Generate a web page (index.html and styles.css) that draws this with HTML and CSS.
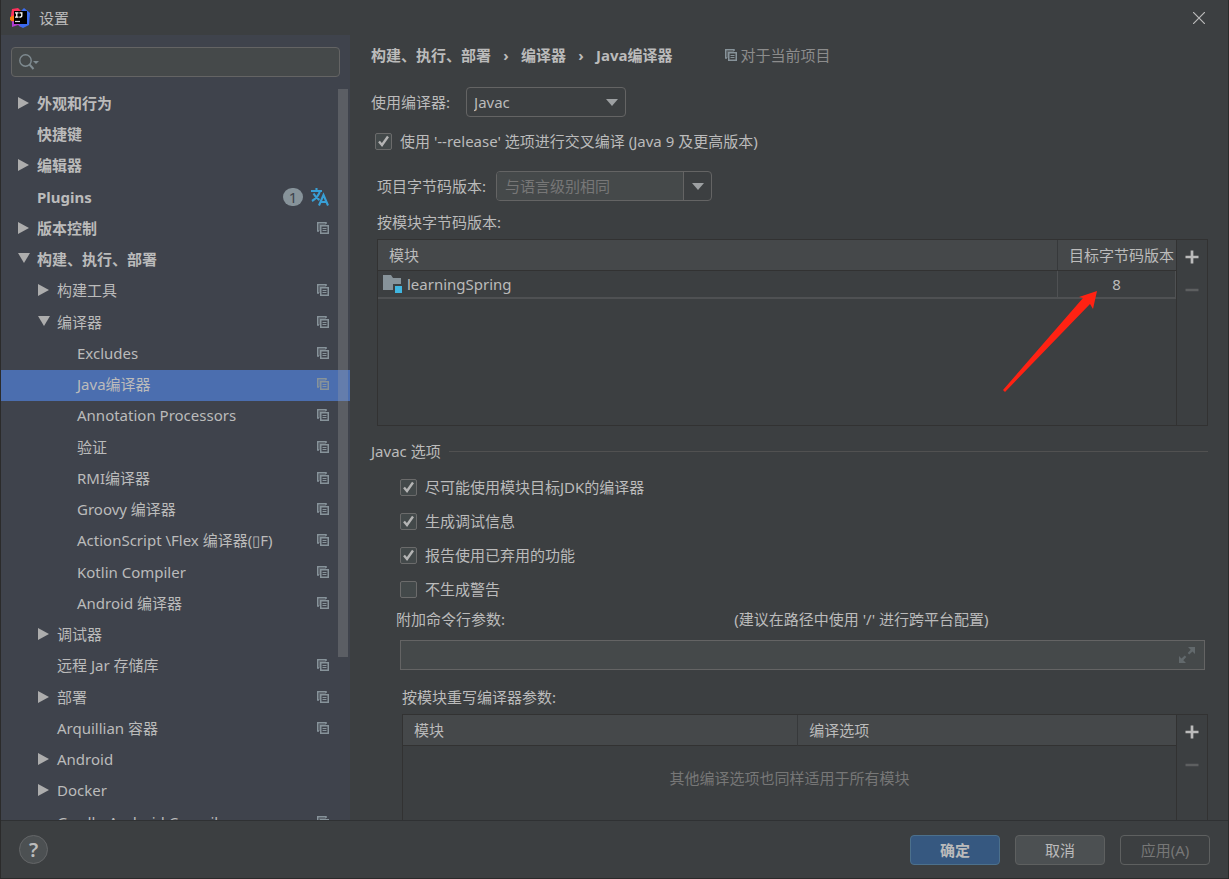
FILE: index.html
```html
<!DOCTYPE html>
<html lang="zh-CN">
<head>
<meta charset="utf-8">
<title>设置</title>
<link rel="stylesheet" href="styles.css">
</head>
<body>
<svg class="sprite" aria-hidden="true">
  <symbol id="right" viewBox="0 0 12 12"><path d="M0 0 11 6 0 12z"/></symbol>
  <symbol id="down" viewBox="0 0 12 12"><path d="M0 0H12L6 10z"/></symbol>
  <symbol id="copy" viewBox="0 0 12 12"><path d="M9 2V.75H.75V9H2" fill="none" stroke="currentColor" stroke-width="1.500"/><path d="M2.500 9V2.500H9" fill="none" stroke="currentColor" stroke-width="1" opacity=".45"/><path d="M3.750 3.750H11.250V11.250H3.750z" fill="none" stroke="currentColor" stroke-width="1.500"/><path d="M5.500 6.500H9.500M5.500 8.500H9.500" stroke="currentColor" stroke-width="1"/></symbol>
  <symbol id="caret" viewBox="0 0 12 7"><path d="M0 0H12L6 7z"/></symbol>
  <symbol id="plus" viewBox="0 0 14 14"><path d="M7 .5V13.500M.5 7H13.500" stroke="currentColor" stroke-width="2.700"/></symbol>
  <symbol id="minus" viewBox="0 0 14 14"><path d="M.5 7H13.500" stroke="currentColor" stroke-width="2.500"/></symbol>
</svg>
<div class="window">
  <header class="titlebar">
    <svg class="logo" viewBox="0 0 20 20">
      <path d="M1 7 2 1 8 0 12 4 5 15 1 13z" fill="#fe315d"/>
      <path d="M0 9 5 7 5 15 0 12z" fill="#f97a12"/>
      <path d="M11 3 14 0 20 5 19 17 13 20 9 18z" fill="#3b6cf0"/>
      <path d="M2 13 8 14 11 19 8 17 2 19z" fill="#b33bd0"/>
      <path d="M4 3H17V16H4z" fill="#000"/>
      <path d="M5 4.800H8.500M6.750 4.800V9M5 9.200H8.500M9.500 4.800H12.500M11.800 4.800V7.800Q11.800 9.200 9.300 9.200" fill="none" stroke="#fff" stroke-width="1.300"/>
      <path d="M5 13.500H10" stroke="#ddd" stroke-width="1.200"/>
    </svg>
    <h1 class="title">设置</h1>
    <button class="close" aria-label="关闭"><svg viewBox="0 0 12 12"><path d="M0 0 12 12M12 0 0 12" stroke="currentColor" stroke-width="1.200"/></svg></button>
  </header>
  <div class="body">
    <aside class="sidebar">
      <div class="search">
        <svg class="search-icon" viewBox="0 0 20 16"><circle cx="6.500" cy="6.500" r="5.700" fill="none" stroke="currentColor" stroke-width="1.400"/><path d="M10.500 10.500 14.500 15" stroke="currentColor" stroke-width="2"/><path d="M14 7H20L17 10z" fill="currentColor"/></svg>
        <input class="search-input" type="text" aria-label="搜索">
      </div>
      <nav class="tree">
        <a class="row top" href="#"><svg class="twisty"><use href="#right"/></svg><span class="name">外观和行为</span></a>
        <a class="row top" href="#"><span class="twisty"></span><span class="name">快捷键</span></a>
        <a class="row top" href="#"><svg class="twisty"><use href="#right"/></svg><span class="name">编辑器</span></a>
        <a class="row top" href="#"><span class="twisty"></span><span class="name">Plugins</span><span class="count">1</span><svg class="translate" viewBox="0 0 18 18"><path d="M0 3H11M5.500 0V3M9 3Q7.500 9 1 13M2.500 5.500Q5 10 8.500 12M8 17.500 12.500 7 17 17.500M9.500 14H15.500" fill="none" stroke="currentColor" stroke-width="2.100"/></svg></a>
        <a class="row top" href="#"><svg class="twisty"><use href="#right"/></svg><span class="name">版本控制</span><svg class="copy"><use href="#copy"/></svg></a>
        <a class="row top" href="#"><svg class="twisty"><use href="#down"/></svg><span class="name">构建、执行、部署</span></a>
        <a class="row mid" href="#"><svg class="twisty"><use href="#right"/></svg><span class="name">构建工具</span><svg class="copy"><use href="#copy"/></svg></a>
        <a class="row mid" href="#"><svg class="twisty"><use href="#down"/></svg><span class="name">编译器</span><svg class="copy"><use href="#copy"/></svg></a>
        <a class="row leaf" href="#"><span class="name">Excludes</span><svg class="copy"><use href="#copy"/></svg></a>
        <a class="row leaf selected" href="#" aria-current="page"><span class="name">Java编译器</span><svg class="copy"><use href="#copy"/></svg></a>
        <a class="row leaf" href="#"><span class="name">Annotation Processors</span><svg class="copy"><use href="#copy"/></svg></a>
        <a class="row leaf" href="#"><span class="name">验证</span><svg class="copy"><use href="#copy"/></svg></a>
        <a class="row leaf" href="#"><span class="name">RMI编译器</span><svg class="copy"><use href="#copy"/></svg></a>
        <a class="row leaf" href="#"><span class="name">Groovy 编译器</span><svg class="copy"><use href="#copy"/></svg></a>
        <a class="row leaf" href="#"><span class="name">ActionScript \Flex 编译器(▯F)</span><svg class="copy"><use href="#copy"/></svg></a>
        <a class="row leaf" href="#"><span class="name">Kotlin Compiler</span><svg class="copy"><use href="#copy"/></svg></a>
        <a class="row leaf" href="#"><span class="name">Android 编译器</span><svg class="copy"><use href="#copy"/></svg></a>
        <a class="row mid" href="#"><svg class="twisty"><use href="#right"/></svg><span class="name">调试器</span></a>
        <a class="row mid" href="#"><span class="twisty"></span><span class="name">远程 Jar 存储库</span><svg class="copy"><use href="#copy"/></svg></a>
        <a class="row mid" href="#"><svg class="twisty"><use href="#right"/></svg><span class="name">部署</span><svg class="copy"><use href="#copy"/></svg></a>
        <a class="row mid" href="#"><span class="twisty"></span><span class="name">Arquillian 容器</span><svg class="copy"><use href="#copy"/></svg></a>
        <a class="row mid" href="#"><svg class="twisty"><use href="#right"/></svg><span class="name">Android</span></a>
        <a class="row mid" href="#"><svg class="twisty"><use href="#right"/></svg><span class="name">Docker</span></a>
        <a class="row mid" href="#"><span class="twisty"></span><span class="name">Gradle-Android Compiler</span><svg class="copy"><use href="#copy"/></svg></a>
        <div class="thumb"></div>
      </nav>
    </aside>
    <main class="main">
      <div class="crumbs">
        <span>构建、执行、部署</span><span class="sep">›</span><span>编译器</span><span class="sep">›</span><span>Java编译器</span>
        <span class="scope"><svg class="copy"><use href="#copy"/></svg>对于当前项目</span>
      </div>
      <div class="compiler">
        <label for="compiler">使用编译器:</label>
        <div class="select">
          <select id="compiler"><option>Javac</option></select>
          <svg class="caret"><use href="#caret"/></svg>
        </div>
      </div>
      <label class="check release"><input type="checkbox" checked>使用 '--release' 选项进行交叉编译 (Java 9 及更高版本)</label>
      <section class="bytecode">
        <div class="project">
          <label for="level">项目字节码版本:</label>
          <div class="combo">
            <input id="level" type="text" placeholder="与语言级别相同">
            <button class="combo-button" aria-label="展开"><svg class="caret"><use href="#caret"/></svg></button>
          </div>
        </div>
        <div class="caption">按模块字节码版本:</div>
        <div class="panel modules">
          <div class="grid">
            <table>
              <thead><tr><th>模块</th><th class="target">目标字节码版本</th></tr></thead>
              <tbody><tr><td><span class="module"><svg class="folder" viewBox="0 0 20 18"><path d="M0 0H8L10 3H18V9H10V15H0z" fill="#87939a"/><path d="M12 11H19V18H12z" fill="#40b6e0"/></svg>learningSpring</span></td><td class="value">8</td></tr></tbody>
            </table>
          </div>
          <div class="tools">
            <button aria-label="添加"><svg><use href="#plus"/></svg></button>
            <button aria-label="移除" disabled><svg><use href="#minus"/></svg></button>
          </div>
          <svg class="arrow" viewBox="0 0 96 102"><path d="M94 1 76 7 80 8 0 100 2 102 87 14 90 19z" fill="#ff2213"/></svg>
        </div>
      </section>
      <h2 class="section-title">Javac 选项</h2>
      <section class="options">
        <label class="check"><input type="checkbox" checked>尽可能使用模块目标JDK的编译器</label>
        <label class="check"><input type="checkbox" checked>生成调试信息</label>
        <label class="check"><input type="checkbox" checked>报告使用已弃用的功能</label>
        <label class="check"><input type="checkbox">不生成警告</label>
      </section>
      <div class="args-head">
        <label for="args">附加命令行参数:</label>
        <span>(建议在路径中使用 '/' 进行跨平台配置)</span>
      </div>
      <div class="args">
        <input id="args" type="text">
        <button class="expand" aria-label="展开"><svg viewBox="0 0 16 16"><path d="M9 0H16V7L13.500 4.500 10.200 7.600 8.700 6 11.700 2.700zM0 9 2.500 11.500 5.800 8.400 7.300 10 4.300 13.300 7 16H0z" fill="currentColor"/></svg></button>
      </div>
      <section class="overrides">
        <div class="caption">按模块重写编译器参数:</div>
        <div class="panel">
          <div class="grid">
            <table>
              <thead><tr><th class="half">模块</th><th>编译选项</th></tr></thead>
            </table>
            <p class="empty">其他编译选项也同样适用于所有模块</p>
          </div>
          <div class="tools">
            <button aria-label="添加"><svg><use href="#plus"/></svg></button>
            <button aria-label="移除" disabled><svg><use href="#minus"/></svg></button>
          </div>
        </div>
      </section>
    </main>
  </div>
  <footer class="footer">
    <button class="help" aria-label="帮助">?</button>
    <button class="btn primary">确定</button>
    <button class="btn">取消</button>
    <button class="btn" disabled>应用(A)</button>
  </footer>
</div>
</body>
</html>
```
FILE: styles.css
```css
* {
  box-sizing: border-box;
}

body {
  margin: 0;
  background: #3c3f41;
  color: #bbbbbb;
  font: 15px/24px "Noto Sans", "Noto Sans CJK SC", sans-serif;
}

button,
input,
select {
  margin: 0;
  padding: 0;
  border: 0;
  background: none;
  color: inherit;
  font: inherit;
}

svg {
  display: block;
  fill: currentColor;
}

.sprite {
  display: none;
}

.window {
  display: flex;
  flex-direction: column;
  height: 100vh;
  border: solid #2b2b2b;
  border-width: 0 1px 1px;
}

/* Title bar */
.titlebar {
  display: flex;
  flex: none;
  align-items: center;
  gap: 9px;
  height: 35px;
  padding: 0 23px 0 9px;
}

.logo {
  width: 20px;
  height: 20px;
}

.title {
  flex: 1;
  margin: 0;
  font-size: 15px;
  font-weight: 400;
}

.close svg {
  width: 12px;
  height: 12px;
}

.body {
  display: flex;
  flex: 1;
  min-height: 0;
}

/* Sidebar */
.sidebar {
  display: flex;
  flex: none;
  flex-direction: column;
  width: 349px;
  background: #3f434c;
}

.search {
  display: flex;
  align-items: center;
  gap: 8px;
  height: 30px;
  margin: 12px 10px;
  padding: 0 7px;
  border: 1px solid #646464;
  border-radius: 4px;
  background: #45494a;
}

.search-icon {
  width: 20px;
  height: 16px;
  color: #7f8b91;
}

.search-input {
  flex: 1;
  outline: 0;
}

.tree {
  position: relative;
  flex: 1;
  min-height: 0;
  overflow: hidden;
}

.row {
  display: flex;
  align-items: center;
  height: 31px;
  padding-right: 21px;
  padding-bottom: 3px;
  color: inherit;
  text-decoration: none;
}

.row:nth-child(4n) {
  height: 32px;
}

.top {
  padding-left: 17px;
  font-weight: 700;
}

.mid {
  padding-left: 37px;
}

.leaf {
  padding-left: 76px;
}

.selected {
  background: #4b6eaf;
}

.twisty {
  width: 12px;
  height: 12px;
  margin-right: 7px;
  color: #adadad;
}

.name {
  flex: 1;
  white-space: nowrap;
}

.copy {
  width: 12px;
  height: 12px;
  color: #87939a;
}

.count {
  width: 20px;
  height: 18px;
  margin-right: 8px;
  border-radius: 9px;
  background: #87939a;
  color: #3f434c;
  font-weight: 400;
  line-height: 18px;
  text-align: center;
}

.translate {
  width: 18px;
  height: 18px;
  color: #389fd6;
}

.thumb {
  position: absolute;
  top: 0;
  right: 2px;
  width: 10px;
  height: 568px;
  background: rgba(166, 166, 166, 0.28);
}

/* Settings page */
.main {
  flex: 1;
  min-width: 0;
  padding: 0 20px 0 21px;
  overflow: hidden;
}

.crumbs {
  display: flex;
  align-items: center;
  height: 40px;
  font-weight: 700;
  white-space: nowrap;
}

.sep {
  width: 30px;
  text-align: center;
}

.scope {
  display: flex;
  align-items: center;
  gap: 4px;
  margin-left: 52px;
  color: #8c8c8c;
  font-weight: 400;
}

.compiler {
  display: flex;
  align-items: center;
  gap: 16px;
  margin-top: 12px;
}

.select {
  display: grid;
  align-items: center;
  width: 160px;
}

.select > * {
  grid-area: 1 / 1;
}

.select select {
  width: 100%;
  height: 30px;
  padding-left: 7px;
  border: 1px solid #646464;
  border-radius: 4px;
  appearance: none;
}

.caret {
  width: 12px;
  height: 7px;
  color: #9da0a2;
}

.select .caret {
  margin-right: 8px;
  justify-self: end;
  pointer-events: none;
}

.check {
  display: flex;
  align-items: center;
  gap: 8px;
}

.check input {
  width: 17px;
  height: 17px;
  border: 1px solid #6b6b6b;
  border-radius: 2px;
  background: #43494a;
  appearance: none;
}

.check input:checked {
  background: #43494a url("data:image/svg+xml,%3Csvg xmlns='http://www.w3.org/2000/svg' viewBox='0 0 16 16'%3E%3Cpath d='M3.500 8 6.500 11.500 12.500 3' fill='none' stroke='%23b4b4b4' stroke-width='2.400'/%3E%3C/svg%3E") center / 16px;
}

.release {
  margin: 12px 0 18px 4px;
}

.bytecode {
  margin-left: 6px;
}

.project {
  display: flex;
  align-items: center;
  gap: 10px;
}

.combo {
  display: flex;
  width: 216px;
  height: 30px;
  border: 1px solid #646464;
  border-radius: 4px;
  overflow: hidden;
}

.combo input {
  flex: 1;
  min-width: 0;
  padding-left: 8px;
  background: #45494a;
}

.combo input::placeholder {
  color: #777777;
}

.combo-button {
  display: grid;
  place-items: center;
  width: 28px;
  border-left: 1px solid #646464;
}

.caption {
  margin: 9px 0 5px;
}

/* Table with add and remove buttons */
.panel {
  position: relative;
  display: flex;
  border: 1px solid #323232;
}

.modules {
  min-height: 187px;
}

.grid {
  flex: 1;
}

.grid table {
  width: 100%;
  border-collapse: separate;
  border-spacing: 0;
  table-layout: fixed;
}

.grid th {
  height: 31px;
  padding: 0 0 0 11px;
  border-bottom: 1px solid #323232;
  background: #45484a;
  font-weight: 400;
  text-align: left;
  white-space: nowrap;
}

.grid th + th {
  border-left: 1px solid #37393b;
}

.grid td {
  height: 28px;
  padding: 0 0 0 5px;
  border-bottom: 2px solid #4f5153;
}

.target {
  width: 119px;
}

.half {
  width: 51%;
}

.grid .value {
  padding: 0;
  border-right: 1px solid #4f5153;
  border-left: 1px solid #4f5153;
  text-align: center;
}

.module {
  display: flex;
  align-items: center;
  gap: 4px;
}

.folder {
  width: 20px;
  height: 18px;
}

.tools {
  display: flex;
  flex-direction: column;
  width: 31px;
  border-left: 1px solid #323232;
}

.tools button {
  display: grid;
  place-items: center;
  height: 33px;
}

.tools svg {
  width: 14px;
  height: 14px;
}

.tools button:disabled {
  color: #5d5f60;
}

.arrow {
  position: absolute;
  top: 50px;
  right: 108px;
  width: 96px;
  height: 102px;
}

.section-title {
  display: flex;
  align-items: center;
  gap: 8px;
  margin: 13px 0 12px;
  font-size: 15px;
  font-weight: 400;
}

.section-title::after {
  flex: 1;
  height: 1px;
  background: #515151;
  content: "";
}

.options {
  display: grid;
  gap: 10px;
  margin-left: 29px;
}

.args-head {
  display: grid;
  grid-template-columns: 5fr 7fr;
  margin: 6px 0 9px 25px;
}

.args {
  display: flex;
  align-items: center;
  height: 30px;
  margin: 0 3px 0 29px;
  padding: 0 9px 0 6px;
  border: 1px solid #646464;
  background: #45494a;
}

.args input {
  flex: 1;
  outline: 0;
}

.expand {
  color: #62696c;
}

.expand svg {
  width: 16px;
  height: 16px;
}

.overrides {
  margin: 15px 0 0 31px;
}

.overrides .panel {
  min-height: 187px;
}

.empty {
  margin: 20px 0;
  color: #777777;
  text-align: center;
}

/* Footer */
.footer {
  display: flex;
  flex: none;
  align-items: center;
  gap: 15px;
  height: 58px;
  padding: 0 18px;
  border-top: 1px solid #2f3133;
}

.help {
  width: 29px;
  height: 29px;
  margin-right: auto;
  border: 1px solid #646668;
  border-radius: 50%;
  background: #4c5052;
  font-size: 20px;
  font-weight: 600;
  line-height: 26px;
}

.btn {
  width: 90px;
  height: 30px;
  border: 1px solid #5e6060;
  border-radius: 4px;
  background: #4c5052;
}

.primary {
  border-color: #4c708c;
  background: #365880;
  font-weight: 600;
}

.btn:disabled {
  background: none;
  color: #777777;
}
```
